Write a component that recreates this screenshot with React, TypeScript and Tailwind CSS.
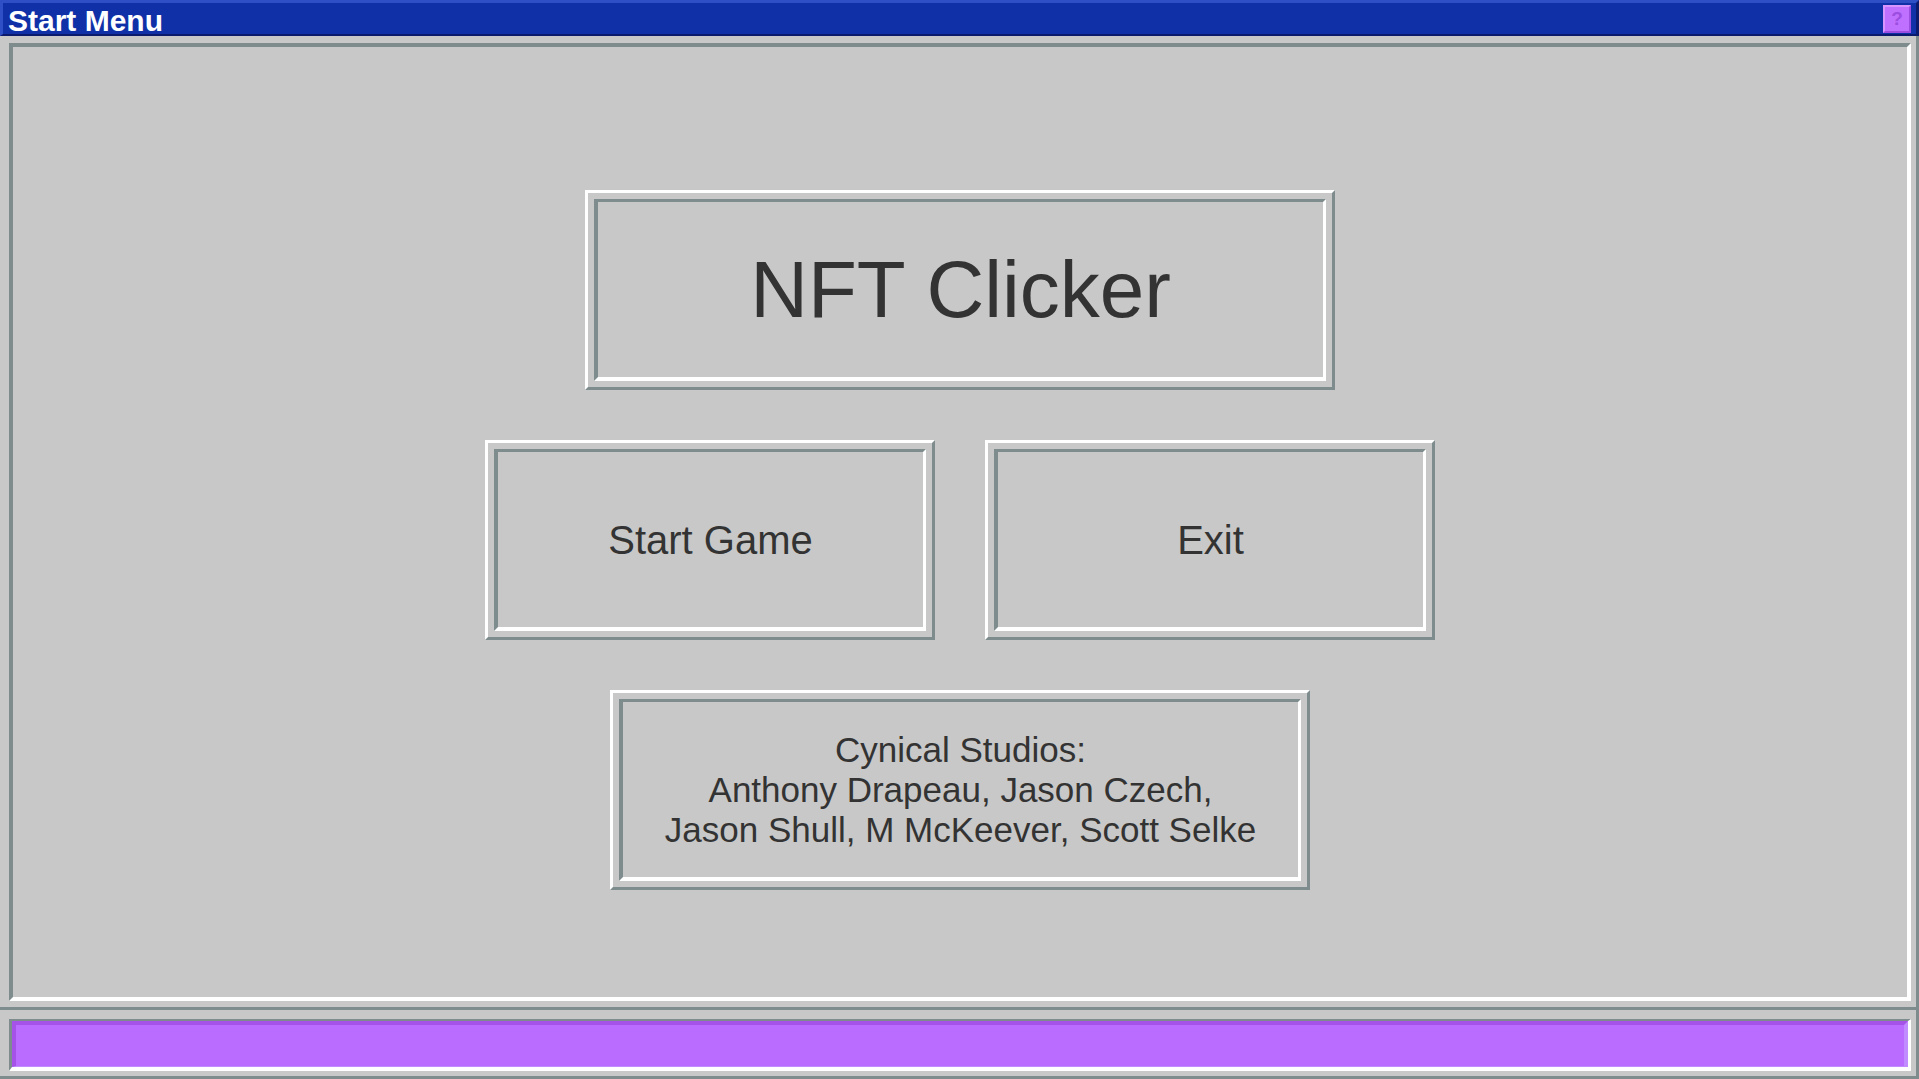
import React from "react";

const BevelBox: React.FC<{ className?: string; children: React.ReactNode }> = ({
  className = "",
  children,
}) => {
  return (
    <div
      className={`border-[3px] border-t-white border-l-white border-r-[#7f8c8d] border-b-[#7f8c8d] p-[6px] ${className}`}
    >
      <div className="flex h-full w-full items-center justify-center border-t-[3px] border-l-4 border-r-[3px] border-b-4 border-t-[#7f8c8d] border-l-[#7f8c8d] border-r-white border-b-white">
        {children}
      </div>
    </div>
  );
};

const App: React.FC = () => {
  return (
    <div className="flex h-screen w-full flex-col overflow-hidden bg-[#c8c8c8] font-['Liberation_Sans',Arial,sans-serif] text-[#333333]">
      {/* title bar */}
      <header className="flex h-[36px] shrink-0 items-center justify-between border-t-[3px] border-l-[3px] border-r-[3px] border-b-2 border-t-[#2f4fc6] border-l-[#2f4fc6] border-r-[#0c1a6e] border-b-[#0c1a6e] bg-[#1030a8] pl-[5px] pr-[5px]">
        <h1 className="pt-[3px] text-[30px] font-bold leading-[31px] text-white">
          Start Menu
        </h1>
        <button className="flex h-[28px] w-[28px] items-center justify-center border-2 border-t-[#d894ff] border-l-[#d894ff] border-r-[#9c4ee0] border-b-[#9c4ee0] bg-[#c070ff] text-[19px] font-bold leading-none text-[#9c4ee0]">
          ?
        </button>
      </header>

      {/* main panel */}
      <main className="flex flex-1 flex-col border-r-[3px] border-b-[3px] border-r-[#7f8c8d] border-b-[#7f8c8d] pt-[7px] pl-[9px] pr-[5px] pb-[6px]">
        <div className="flex flex-1 flex-col items-center gap-[50px] border-4 border-t-[#7f8c8d] border-l-[#7f8c8d] border-r-white border-b-white pt-[143px]">
          <BevelBox className="h-[200px] w-[750px]">
            <h2 className="text-[80px] leading-[92px]">NFT Clicker</h2>
          </BevelBox>

          <div className="flex gap-[50px]">
            <button className="h-[200px] w-[450px] text-left">
              <BevelBox className="h-full w-full">
                <span className="text-[40px] leading-[46px]">Start Game</span>
              </BevelBox>
            </button>
            <button className="h-[200px] w-[450px] text-left">
              <BevelBox className="h-full w-full">
                <span className="text-[40px] leading-[46px]">Exit</span>
              </BevelBox>
            </button>
          </div>

          <BevelBox className="h-[200px] w-[700px]">
            <p className="text-center text-[35px] leading-[40px]">
              Cynical Studios:
              <br />
              Anthony Drapeau, Jason Czech,
              <br />
              Jason Shull, M McKeever, Scott Selke
            </p>
          </BevelBox>
        </div>
      </main>

      {/* status bar */}
      <footer className="h-[69px] shrink-0 border-r-[3px] border-b-[3px] border-r-[#7f8c8d] border-b-[#7f8c8d] pt-[9px] pl-[9px] pr-[5px] pb-[5px]">
        <div className="h-full border-t-2 border-l-[3px] border-r-[3px] border-b-4 border-t-[#7f8c8d] border-l-[#7f8c8d] border-r-white border-b-white">
          <div className="h-full border-t-4 border-l-4 border-r-4 border-b border-t-[#a452e8] border-l-[#a452e8] border-r-[#c08cff] border-b-[#c08cff] bg-[#b96cff]" />
        </div>
      </footer>
    </div>
  );
};

export default App;
